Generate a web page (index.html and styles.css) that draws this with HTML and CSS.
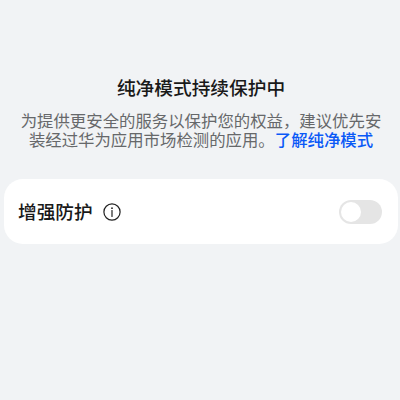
FILE: index.html
```html
<!DOCTYPE html>
<html lang="zh-CN">
<head>
<meta charset="utf-8">
<title>纯净模式</title>
<link rel="stylesheet" href="styles.css">
</head>
<body>
<main class="page">
  <section class="intro">
    <h1 class="title">纯净模式持续保护中</h1>
    <p class="description">
      <span class="line">为提供更安全的服务以保护您的权益，建议优先安</span>
      <span class="line">装经过华为应用市场检测的应用。<a class="link">了解纯净模式</a></span>
    </p>
  </section>
  <section class="card">
    <span class="label">增强防护</span>
    <svg class="info" viewBox="0 0 18 18" aria-hidden="true">
      <circle cx="9" cy="9" r="8.1" fill="none" stroke="#222" stroke-width="1.2"/>
      <circle cx="9" cy="5.2" r=".9" fill="#222"/>
      <path d="M9 7.5V13.4" stroke="#222" stroke-width="1.2" stroke-linecap="round"/>
    </svg>
    <span class="toggle" role="switch" aria-checked="false"></span>
  </section>
</main>
</body>
</html>
```
FILE: styles.css
```css
* { box-sizing: border-box; }
body {
  margin: 0;
  background: #f1f3f5;
  color: #191919;
  font-family: "Noto Sans CJK SC", sans-serif;
}
.page {
  height: 400px;
  padding: 73px 2px 0 4px;
  overflow: hidden;
}
.intro { height: 106px; text-align: center; }
.title {
  margin: 0;
  font-size: 18.7px;
  line-height: 27px;
  font-weight: 500;
}
.description {
  margin: 11px 0 0;
  color: #66686a;
  font-size: 16.4px;
  line-height: 19px;
}
.line { display: block; white-space: nowrap; }
.link { color: #0a59f7; font-weight: 500; }
.card {
  display: flex;
  align-items: center;
  height: 65px;
  padding: 0 16px 0 14px;
  border-radius: 19px;
  background: #fff;
}
.label {
  padding-bottom: 2px;
  font-size: 18.7px;
  font-weight: 500;
  line-height: 28px;
}
.info { width: 18px; height: 18px; margin-left: 10px; }
.toggle {
  width: 43px;
  height: 24px;
  margin-left: auto;
  padding: 2px;
  border-radius: 12px;
  background: #e5e5e5;
}
.toggle::before {
  content: "";
  display: block;
  width: 20px;
  height: 20px;
  border-radius: 50%;
  background: #fff;
}
```
